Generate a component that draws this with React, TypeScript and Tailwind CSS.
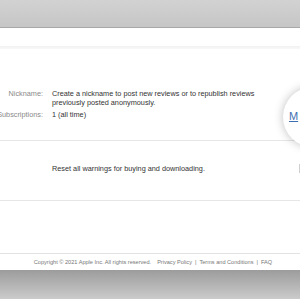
export default function App() {
  return (
    <div className="relative w-[300px] h-[300px] overflow-hidden bg-white font-['Liberation_Sans',Arial,sans-serif]">
      {/* top bar */}
      <div className="h-[28px] bg-gradient-to-b from-[#d2d2d2] to-[#c6c6c6] border-b border-[#a8a8a8]" />
      <div className="h-[18px] bg-white" />
      <div className="h-[3px] bg-gradient-to-b from-[#f1f1f1] to-[#f8f8f8]" />

      {/* account details */}
      <div className="h-[91px] pt-[41px] text-[7.3px] leading-[8.5px]">
        <div className="flex gap-[9px]">
          <div className="w-[43px] shrink-0 flex justify-end">
            <span className="shrink-0 whitespace-nowrap text-[#8a8a8a]">Nickname:</span>
          </div>
          <div className="w-[215px] text-[#333]">
            Create a nickname to post new reviews or to republish reviews previously posted anonymously.
          </div>
        </div>
        <div className="flex gap-[9px] mt-[4px]">
          <div className="w-[43px] shrink-0 flex justify-end">
            <span className="shrink-0 whitespace-nowrap text-[#8a8a8a]">Subscriptions:</span>
          </div>
          <div className="text-[#333]">1 (all time)</div>
        </div>
      </div>
      <div className="h-px bg-[#e6e6e6]" />

      {/* warnings */}
      <div className="h-[59px] pt-[24px] text-[7.3px] leading-[8.5px] flex">
        <div className="w-[52px] shrink-0" />
        <div className="text-[#333] flex-1">Reset all warnings for buying and downloading.</div>
        <div className="w-px h-[9px] mt-[-1px] bg-[#d0d0d0]" />
      </div>
      <div className="h-px bg-[#e6e6e6]" />

      <div className="h-[52px]" />
      <div className="h-px bg-[#e2e2e2]" />

      {/* footer */}
      <div className="h-[16px] flex items-center justify-center gap-[3px] text-[5.6px] text-[#777] whitespace-nowrap pl-[6px]">
        <span>Copyright © 2021 Apple Inc. All rights reserved.</span>
        <span className="ml-[3px]">Privacy Policy</span>
        <span>|</span>
        <span>Terms and Conditions</span>
        <span>|</span>
        <span>FAQ</span>
      </div>

      {/* bottom bar */}
      <div className="h-[29px] bg-gradient-to-b from-[#9c9c9c] to-[#cbcbcb]" />

      {/* magnifier */}
      <div className="absolute left-[283px] top-[87px] w-[60px] h-[60px] rounded-full bg-white shadow-[0_0_10px_rgba(0,0,0,0.25)] flex items-center pl-[6px]">
        <span className="text-[11px] leading-none text-[#3f6fb0] underline underline-offset-[1px] mt-[-1px]">M</span>
      </div>
    </div>
  );
}
